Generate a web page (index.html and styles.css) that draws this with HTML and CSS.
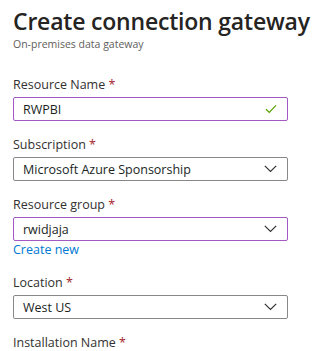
FILE: index.html
```html
<!DOCTYPE html>
<html lang="en">
<head>
  <meta charset="UTF-8" />
  <title>Create connection gateway</title>
  <link rel="stylesheet" href="styles.css">
</head>
<body>
  <div class="panel">
    <h1>Create connection gateway</h1>
    <div class="subtitle">On-premises data gateway</div>

    <div class="field">
      <label>Resource Name <span class="req">*</span></label>
      <div class="input focused">
        <span>RWPBI</span>
        <svg class="icon check" width="12" height="10" viewBox="0 0 12 10"><path d="M1 5.2 L4.3 8.4 L11 1.4" fill="none" stroke="#57a300" stroke-width="1.2"/></svg>
      </div>
    </div>

    <div class="field">
      <label>Subscription <span class="req">*</span></label>
      <div class="input">
        <span>Microsoft Azure Sponsorship</span>
        <svg class="icon" width="13" height="8" viewBox="0 0 13 8"><path d="M0.8 0.8 L6.5 6.5 L12.2 0.8" fill="none" stroke="#323130" stroke-width="1.2"/></svg>
      </div>
    </div>

    <div class="field">
      <label>Resource group <span class="req">*</span></label>
      <div class="input focused">
        <span>rwidjaja</span>
        <svg class="icon" width="13" height="8" viewBox="0 0 13 8"><path d="M0.8 0.8 L6.5 6.5 L12.2 0.8" fill="none" stroke="#323130" stroke-width="1.2"/></svg>
      </div>
      <a class="link" href="#">Create new</a>
    </div>

    <div class="field">
      <label>Location <span class="req">*</span></label>
      <div class="input">
        <span>West US</span>
        <svg class="icon" width="13" height="8" viewBox="0 0 13 8"><path d="M0.8 0.8 L6.5 6.5 L12.2 0.8" fill="none" stroke="#323130" stroke-width="1.2"/></svg>
      </div>
    </div>

    <div class="field">
      <label>Installation Name <span class="req">*</span></label>
    </div>
  </div>
</body>
</html>
```

FILE: styles.css
```css
body {
  margin: 0;
  background: #ffffff;
  color: #323130;
  font-family: "Open Sans", "Noto Sans", sans-serif;
}

.panel {
  padding: 6px 0 0 13px;
  width: 275px;
}

h1 {
  margin: 0;
  font-size: 23px;
  font-weight: 600;
  line-height: 30px;
  letter-spacing: -0.2px;
  color: #252423;
  white-space: nowrap;
}

.subtitle {
  font-size: 10.5px;
  line-height: 16px;
  color: #605e5c;
  margin-bottom: 24px;
}

.field {
  margin-bottom: 15px;
}

label {
  display: block;
  font-size: 12.5px;
  line-height: 18px;
  margin-bottom: 3px;
  color: #323130;
}

.req {
  color: #a4262c;
}

.input {
  box-sizing: border-box;
  height: 24px;
  border: 1px solid #8a8886;
  border-radius: 2px;
  display: flex;
  align-items: center;
  justify-content: space-between;
  padding: 0 10px 0 9px;
  font-size: 12.5px;
  color: #201f1e;
}

.input.focused {
  border-color: #a259c6;
}

.icon {
  display: block;
}

.link {
  display: block;
  font-size: 12.5px;
  line-height: 18px;
  color: #0078d4;
  text-decoration: none;
}
```
